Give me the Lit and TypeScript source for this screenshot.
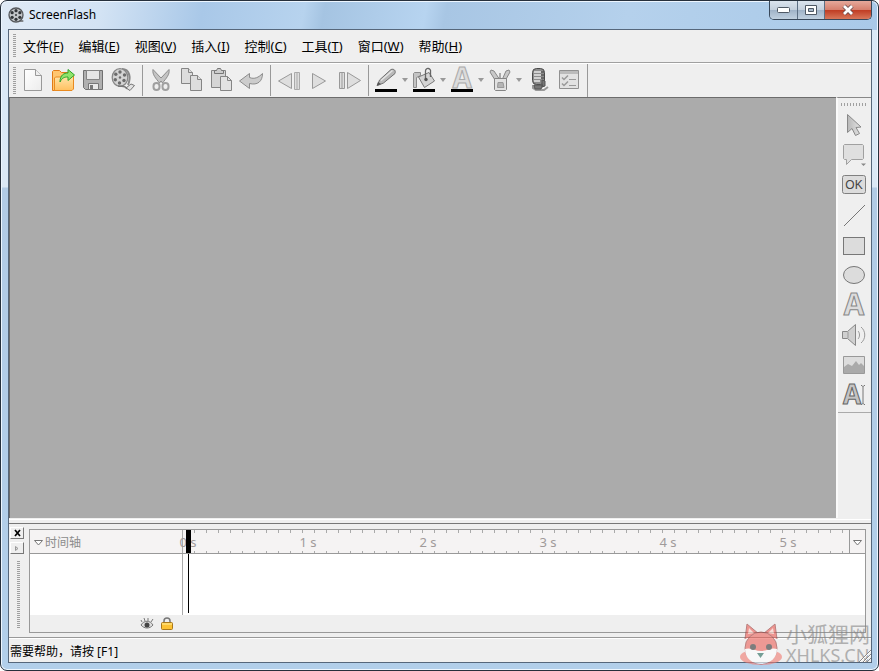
import { LitElement, html, css, svg, TemplateResult } from "lit";
import { customElement } from "lit/decorators.js";

interface Tool {
  label: string;
  art: TemplateResult;
  drop?: boolean;
}

const colorBar = svg`<path d="M1 21h22v3H1z" fill="#000"/>`;

const art = {
  reel: svg`<path d="M15 21h8" stroke="#555" stroke-width="2"/><circle cx="12" cy="12" r="10.500" fill="#c3c6ca" stroke="#55585c" stroke-width="2"/>
    <g fill="#33363a"><circle cx="12" cy="5.500" r="2.400"/><circle cx="17.800" cy="8.500" r="2.400"/><circle cx="17.800" cy="15.500" r="2.400"/><circle cx="12" cy="18.500" r="2.400"/><circle cx="6.200" cy="15.500" r="2.400"/><circle cx="6.200" cy="8.500" r="2.400"/><circle cx="12" cy="12" r="1.500"/></g>`,
  page: svg`<path d="M3.500 1.500h11l6 6v15h-17z" fill="url(#paper)" stroke="#999"/><path d="M14.500 1.500v6h6" fill="#eee" stroke="#999"/>`,
  open: svg`<path d="M1.500 22.500V3.500l1-1h6l2 2h7v3h3v14l-1 1z" fill="#ffc670" stroke="#e07b18"/><path d="M3.500 22.500V10l1-1h7l2-2h8l1 1v13l-1.500 1.500z" fill="url(#folder)" stroke="#e98a20"/><path d="M9 14c0-7 4-9 8-9V1.500L23.500 7 17 12.500V9c-4 0-6 1-8 5z" fill="#8fe36a" stroke="#2fa32b"/>`,
  save: svg`<path d="M2.500 2.500h19v19h-17l-2-2z" fill="#b0b0b0" stroke="#707070"/><path d="M5.500 2.500h13v9h-13z" fill="#e6e6e6" stroke="#858585"/><path d="M7.500 15.500h10v6h-10z" fill="#e9e9e9" stroke="#777"/><path d="M9 17h3v4H9z" fill="#777"/>`,
  film: svg`<path d="M11 1c8 0 9 9 6 16" fill="none" stroke="#888" stroke-width="2"/><path d="M15 20l5-4 3.500 1.500-4.500 5z" fill="#e2e2e2" stroke="#777"/><ellipse cx="9" cy="9.500" rx="7.800" ry="8.800" fill="#d4d4d4" stroke="#888" stroke-width="1.300"/><path d="M7 18c4 1 7-1 9 3" fill="none" stroke="#777" stroke-width="1.500"/><g fill="#6c6c6c"><circle cx="9" cy="4" r="1.700"/><circle cx="13.500" cy="7" r="1.700"/><circle cx="13" cy="12.500" r="1.700"/><circle cx="8.500" cy="15" r="1.700"/><circle cx="4.300" cy="11.800" r="1.700"/><circle cx="4.800" cy="6.300" r="1.700"/><circle cx="9" cy="9.500" r="1.200"/></g>`,
  cut: svg`<path d="M4 1.500c-1 5 3 9 6.500 13.500l1.500-2 1.500 2C17 10.500 21 6.500 20 1.500L12 10z" fill="#c4c4c4" stroke="#8c8c8c"/><g fill="none" stroke="#a0a0a0" stroke-width="2"><rect x="4.500" y="15" width="6" height="7" rx="3"/><rect x="13.500" y="15" width="6" height="7" rx="3"/></g>`,
  copy: svg`<g fill="#ddd" stroke="#858585"><path d="M2.500 .5h7l4 4v11h-11z"/><path d="M9.500 .5v4h4"/><path d="M11.500 7.500h7l4 4v11h-11z"/><path d="M18.500 7.500v4h4"/></g>`,
  paste: svg`<path d="M2.500 2.500h14v17h-14z" fill="#d5d5d5" stroke="#858585"/><path d="M5.500 5.500v-3h2l1-2h3l1 2h2v3z" fill="#ccc" stroke="#777"/><path d="M11.500 8.500h7l4 4v10h-11z" fill="#e2e2e2" stroke="#858585"/><path d="M18.500 8.500v4h4" fill="none" stroke="#858585"/>`,
  undo: svg`<path d="M.5 13l10-7.500v4c5 2 9 0 13-4 0 8-5 12-13 10v5z" fill="#ccc" stroke="#8c8c8c"/>`,
  prev: svg`<path d="M14.500 5.500v15L1.500 13z" fill="#dedede" stroke="#999"/><path d="M17.500 4.500h5v17h-5zM20 5v16" fill="#dedede" stroke="#aaa"/>`,
  play: svg`<path d="M5.500 5.500v15L18.500 13z" fill="#dedede" stroke="#999"/>`,
  next: svg`<path d="M10.500 4.500v16l13-8z" fill="#dedede" stroke="#999"/><path d="M2.500 4.500h5v16h-5zM5 5v15" fill="#dedede" stroke="#999"/>`,
  pen: svg`<path d="M3.500 17.500L5.500 12 17 1.500c3-1 5 1 4 4L9.500 15z" fill="#b8b8b8" stroke="#707070"/><path d="M7 12.500L18.500 2.500" stroke="#e4e4e4" stroke-width="1.500"/><path d="M2.500 18l1.500-4 3 2z" fill="#555"/>${colorBar}`,
  bucket: svg`<path d="M8.500 4.500h-6l-1 1v14h3v-10l4-2z" fill="#c4c4c4" stroke="#8c8c8c"/><path d="M6.500 9L17 4.500l5.500 8.500-10 6.500z" fill="#d4d4d4" stroke="#7a7a7a"/><path d="M13.500 11V3c0-4 6-3 5 1v5" fill="none" stroke="#666" stroke-width="1.300"/><circle cx="14" cy="11.500" r="1.700" fill="#555"/>${colorBar}`,
  fontColor: svg`<text x="12" y="20" text-anchor="middle" class="letter pale">A</text>${colorBar}`,
  cup: svg`<path d="M7 12L2 4l1-2 3 1 6 9zM14 12l4-9 3-1 1 2-5 9z" fill="#c8c8c8" stroke="#888"/><path d="M12 11V5" stroke="#aaa" stroke-width="2"/><path d="M6.500 10.500h12v11l-1 1h-10l-1-1z" fill="#e2e2e2" stroke="#858585"/><path d="M10 14.500h5l1 5H9.500z" fill="#b5b5b5" stroke="#999"/>`,
  mic: svg`<rect x="5.500" y=".5" width="12" height="16" rx="4" fill="#8c8c8c" stroke="#4a4a4a"/><path d="M7 4h7M7 7h7M7 10h7M7 13h6" stroke="#e8e8e8" stroke-width="1.500"/><path d="M14 4h3M14 7h3M14 10h3" stroke="#444"/><path d="M6 17v3l3 2h8l4-3" fill="none" stroke="#999" stroke-width="2"/><path d="M7 17h9l-2 4H8zM15 12l3 1v5l-3 1z" fill="#777" stroke="#555"/>`,
  list: svg`<path d="M2.500 2.500h19v18h-19z" fill="#e2e2e2" stroke="#909090"/><path d="M3 3h18v3H3z" fill="#bbb"/><path d="M5 9.500l2 2 4-4M5 15.500l2 2 4-4" fill="none" stroke="#999" stroke-width="1.500"/><path d="M12 11.500h7M12 17.500h7" stroke="#999"/>`,
  pointer: svg`<path d="M6.500 1.500v18l4.500-4 3.500 7 4-2-3.500-6 5-.5z" fill="url(#metal)" stroke="#888"/>`,
  bubble: svg`<path d="M2.500 2.500l1-1h18l1 1v13l-1 1h-11l-5 5v-5h-2l-1-1z" fill="#dfdfdf" stroke="#a0a0a0"/><path d="M20 20.500h5l-2.500 2.500z" fill="#888"/>`,
  ok: svg`<rect x="1.500" y="2.500" width="23" height="18" rx="2" fill="#dcdcdc" stroke="#808080"/><text x="13" y="16" text-anchor="middle" class="okay">OK</text>`,
  line: svg`<path d="M3 23L24 2" stroke="#777"/>`,
  rect: svg`<rect x="2.500" y="4.500" width="21" height="17" fill="#dcdcdc" stroke="#777"/>`,
  ellipse: svg`<ellipse cx="13" cy="12" rx="10.500" ry="8.500" fill="#dcdcdc" stroke="#777"/>`,
  letter: svg`<text x="13" y="22" text-anchor="middle" class="letter">A</text>`,
  sound: svg`<path d="M1.500 8.500h5l8-7v21l-8-7h-5z" fill="#d0d0d0" stroke="#888"/><path d="M7 9v6M17 8c2 2 2 6 0 8M20 4c5 4 5 12 0 16" fill="none" stroke="#999"/>`,
  image: svg`<path d="M2.500 3.500h21v17h-21z" fill="#ddd" stroke="#999"/><path d="M3 14l4-3 4 2 4-5 3 4 2-2 3 3v7H3z" fill="#aaa"/>`,
  input: svg`<text x="11" y="21" text-anchor="middle" class="letter dark">A</text><path d="M20 2.500h1l1 1 1-1h1M20 21.500h1l1-1 1 1h1M22 3v18" fill="none" stroke="#777"/>`,
};

const toolGroups: Tool[][] = [
  [
    { label: "新建", art: art.page },
    { label: "打开", art: art.open },
    { label: "保存", art: art.save },
    { label: "导出影片", art: art.film },
  ],
  [
    { label: "剪切", art: art.cut },
    { label: "复制", art: art.copy },
    { label: "粘贴", art: art.paste },
    { label: "撤销", art: art.undo },
  ],
  [
    { label: "上一帧", art: art.prev },
    { label: "播放", art: art.play },
    { label: "下一帧", art: art.next },
  ],
  [
    { label: "线条颜色", art: art.pen, drop: true },
    { label: "填充颜色", art: art.bucket, drop: true },
    { label: "文字颜色", art: art.fontColor, drop: true },
    { label: "效果", art: art.cup, drop: true },
    { label: "录音", art: art.mic },
    { label: "属性", art: art.list },
  ],
];

const paletteTools: Tool[] = [
  { label: "选择", art: art.pointer },
  { label: "气泡", art: art.bubble },
  { label: "按钮", art: art.ok },
  { label: "直线", art: art.line },
  { label: "矩形", art: art.rect },
  { label: "椭圆", art: art.ellipse },
  { label: "文本", art: art.letter },
  { label: "声音", art: art.sound },
  { label: "图片", art: art.image },
  { label: "输入框", art: art.input },
];

const menus = [
  ["文件", "F"],
  ["编辑", "E"],
  ["视图", "V"],
  ["插入", "I"],
  ["控制", "C"],
  ["工具", "T"],
  ["窗口", "W"],
  ["帮助", "H"],
];

const seconds = [0, 1, 2, 3, 4, 5];

@customElement("app-root")
export class AppRoot extends LitElement {
  static styles = css`
    :host {
      display: block;
      font: 13px/20px "Noto Sans", "Noto Sans CJK SC", sans-serif;
      color: #000;
    }
    * {
      box-sizing: border-box;
    }
    button {
      margin: 0;
      padding: 0;
      border: 0;
      background: none;
      font: inherit;
      color: inherit;
    }
    svg {
      display: block;
      overflow: visible;
    }
    .defs {
      position: absolute;
      width: 0;
      height: 0;
    }
    .window {
      position: relative;
      display: flex;
      flex-direction: column;
      min-height: 100vh;
      padding: 0 6px 7px 7px;
      border: 1px solid #26303c;
      border-radius: 7px;
      background:
        linear-gradient(100deg, #dfeaf6 0, #d3e3f4 100px, #a9c8e8 200px, #b7d3ee 300px, #a5c4e2 320px, #b7d4f0 420px, #a8c6e4 440px, #b5d1ec 620px, #a9c9e8 100%) 0 0 / 100% 29px no-repeat,
        linear-gradient(#d9e8f7 0, #dbe8f5 186px, #b2cbe5 187px, #b2cfea 100%);
      box-shadow: inset 0 0 0 1px #edf6ff;
    }
    .title {
      display: flex;
      justify-content: space-between;
      align-items: flex-start;
      height: 28px;
      flex: none;
    }
    .brand {
      display: flex;
      align-items: center;
      gap: 5px;
      height: 28px;
      margin: 0;
      font-size: 12px;
      font-weight: 400;
    }
    .caption {
      display: flex;
      border: 1px solid #39485a;
      border-top: 0;
      border-radius: 0 0 5px 5px;
      overflow: hidden;
    }
    .cap {
      display: grid;
      place-items: center;
      width: 28px;
      height: 18px;
      border-right: 1px solid #5c6f84;
      background: linear-gradient(#dbe4ee 0, #c4d0dd 48%, #9fb2c7 50%, #c0d0df 100%);
    }
    .cap.mid {
      width: 27px;
    }
    .cap.close {
      width: 46px;
      border: 0;
      background: linear-gradient(#e5a99b 0, #d6806e 48%, #bf3b22 50%, #d8775a 100%);
    }
    .client {
      display: flex;
      flex-direction: column;
      flex: 1;
      border: 1px solid #56677b;
      background: #efefef;
    }
    .menubar {
      display: flex;
      align-items: center;
      height: 33px;
      padding-left: 4px;
      border-bottom: 1px solid #a0a0a0;
    }
    .menus {
      display: flex;
      gap: 1px;
    }
    .menus button {
      padding: 0 7px;
    }
    .grip {
      flex: none;
      width: 3px;
      height: 24px;
      background: repeating-linear-gradient(#a0a0a0 0 1px, #efefef 1px 2px);
    }
    .grip.wide {
      width: 26px;
      height: 3px;
      margin: 5px 0 4px 3px;
      background: repeating-linear-gradient(90deg, #a0a0a0 0 1px, #efefef 1px 3px);
    }
    .toolbar {
      display: flex;
      height: 34px;
      padding-left: 4px;
      border-top: 1px solid #fff;
    }
    .toolbar .grip {
      height: 27px;
      margin: 3px 2px 0 0;
    }
    .group {
      display: flex;
      align-items: center;
      padding-bottom: 2px;
    }
    .rule {
      width: 8px;
      height: 31px;
      border-left: 1px solid #999;
      margin: 1px -4px 0 4px;
    }
    .rule.end {
      height: 33px;
      margin: 0 0 0 3px;
    }
    .tool {
      display: grid;
      place-items: center;
      width: 30px;
      height: 30px;
    }
    .tool.split {
      width: 28px;
    }
    .drop {
      display: grid;
      place-items: center;
      width: 10px;
      height: 30px;
    }
    .letter {
      font: bold 34px "Liberation Mono", monospace;
      fill: #dcdcdc;
      stroke: #888;
    }
    .letter.pale {
      font-size: 32px;
      stroke: #aaa;
    }
    .letter.dark {
      font-size: 30px;
      fill: #c4c4c4;
      stroke: #666;
    }
    .okay {
      font: 12px "Liberation Sans", sans-serif;
      fill: #444;
    }
    .middle {
      display: flex;
      flex: 1;
    }
    .stage {
      flex: 1;
      border: 1px solid #6c6c6c;
      border-width: 1px 0 0 1px;
      background: #ababab;
    }
    .side {
      width: 35px;
      border-left: 2px solid #fafafa;
      border-top: 1px solid #888;
    }
    .palette {
      padding-bottom: 2px;
      border-bottom: 1px solid #aaa;
    }
    .dock {
      display: flex;
      margin-top: 5px;
      padding: 5px 5px 4px 1px;
      border-top: 1px solid #777;
      border-bottom: 1px solid #999;
      box-shadow: 0 -3px 0 #efefef, 0 -4px 0 #fff;
    }
    .dockside {
      display: flex;
      flex-direction: column;
      width: 19px;
      gap: 3px;
      margin-top: -2px;
    }
    .mini {
      display: grid;
      place-items: center;
      flex: none;
      width: 14px;
      height: 12px;
      border: 1px solid #fff;
      border-right-color: #777;
      border-bottom-color: #777;
    }
    .dockside .grip {
      height: 68px;
      margin: 4px 0 0 7px;
    }
    .timeline {
      flex: 1;
      min-width: 0;
      border: 1px solid #999;
    }
    .head {
      display: flex;
      height: 24px;
      background: #f5f3f3;
      border-bottom: 1px solid #999;
      color: #8c8c8c;
    }
    .name {
      display: flex;
      align-items: center;
      gap: 2px;
      width: 153px;
      padding: 2px 0 0 4px;
      border-right: 1px solid #aaa;
      font-size: 12px;
    }
    .ruler {
      position: relative;
      display: flex;
      flex: 1;
      min-width: 0;
      background:
        repeating-linear-gradient(90deg, transparent 0 11px, #aaa 11px 12px) 0 0 / 100% 3px no-repeat,
        repeating-linear-gradient(90deg, transparent 0 11px, #aaa 11px 12px) 0 100% / 100% 2px no-repeat;
    }
    .second {
      flex: none;
      width: 24px;
      margin-left: -7px;
      margin-right: 103px;
      text-align: center;
      white-space: nowrap;
      line-height: 25px;
      color: #a09a9a;
    }
    .playhead {
      position: absolute;
      left: 3px;
      top: 0;
      width: 5px;
      height: 23px;
      background: #000;
    }
    .more {
      display: grid;
      place-items: center;
      flex: none;
      width: 16px;
      padding-top: 2px;
      border-left: 1px solid #999;
    }
    .tracks {
      display: flex;
      height: 61px;
      background: #fff;
    }
    .track-names {
      width: 153px;
      border-right: 1px solid #aaa;
    }
    .track {
      padding-left: 5px;
    }
    .cursor-line {
      width: 1px;
      height: 59px;
      background: #000;
    }
    .foot {
      display: flex;
      align-items: center;
      gap: 6px;
      height: 17px;
      padding-left: 110px;
    }
    .status {
      display: flex;
      align-items: center;
      height: 24px;
      padding: 2px 0 0 1px;
      border-top: 1px solid #fff;
      font-size: 12px;
    }
    .mark {
      position: absolute;
      right: 8px;
      bottom: 4px;
      display: flex;
      gap: 3px;
      opacity: 0.6;
      color: #858585;
      pointer-events: none;
    }
    .words {
      width: 84px;
      white-space: nowrap;
      font-size: 21px;
      line-height: 24px;
    }
    .words div + div {
      font: 18px/18px "Noto Sans", sans-serif;
    }
    .resize {
      position: absolute;
      right: 7px;
      bottom: 8px;
    }
  `;

  private icon(content: TemplateResult, size = 24) {
    return html`<svg width=${size} height=${size} viewBox="0 0 24 24" fill="none" aria-hidden="true">${content}</svg>`;
  }

  private tool(t: Tool) {
    return html`<button class="tool ${t.drop ? "split" : ""}" aria-label=${t.label}>${this.icon(t.art)}</button>
      ${t.drop
        ? html`<button class="drop" aria-label="${t.label}选项"><svg width="6" height="4"><path d="M0 0h6L3 4z" fill="#999" /></svg></button>`
        : ""}`;
  }

  private triangle() {
    return html`<svg width="9" height="6"><path d="M.5 .5h8L4.500 5z" fill="#fff" stroke="#777" /></svg>`;
  }

  render() {
    return html`
      <svg class="defs" aria-hidden="true">
        <defs>
          <linearGradient id="paper" x1="0" y1="0" x2="1" y2="1">
            <stop offset="0" stop-color="#fff" />
            <stop offset="1" stop-color="#ececec" />
          </linearGradient>
          <linearGradient id="folder" x1="0" y1="0" x2="0" y2="1">
            <stop offset="0" stop-color="#ffe8b0" />
            <stop offset="1" stop-color="#ffc060" />
          </linearGradient>
          <linearGradient id="metal" x1="0" y1="0" x2="1" y2="0">
            <stop offset="0" stop-color="#b8b8b8" />
            <stop offset="1" stop-color="#e4e4e4" />
          </linearGradient>
        </defs>
      </svg>
      <div class="window">
        <header class="title">
          <h1 class="brand">${this.icon(art.reel, 16)}<span>ScreenFlash</span></h1>
          <div class="caption">
            <button class="cap" aria-label="最小化"><svg width="13" height="6"><rect x="0.500" y="0.500" width="12" height="5" rx="1" fill="#fff" stroke="#4f5965" /></svg></button>
            <button class="cap mid" aria-label="最大化"><svg width="12" height="10"><path d="M.5 .5h11v9H.5z" fill="#fff" stroke="#4f5965" /><path d="M3.500 3.500h5v3h-5z" fill="#a9b9ca" stroke="#4f5965" /></svg></button>
            <button class="cap close" aria-label="关闭"><svg width="12" height="10"><path d="M2 1l8 8M10 1l-8 8" stroke="#6b4a4a" stroke-width="4.500" /><path d="M2 1l8 8M10 1l-8 8" stroke="#fff" stroke-width="2.800" /></svg></button>
          </div>
        </header>
        <main class="client">
          <nav class="menubar">
            <div class="grip"></div>
            <div class="menus">${menus.map(([name, key]) => html`<button>${name}(<u>${key}</u>)</button>`)}</div>
          </nav>
          <div class="toolbar" role="toolbar">
            <div class="grip"></div>
            ${toolGroups.map(
              (group, i) => html`${i ? html`<div class="rule"></div>` : ""}
                <div class="group">${group.map((t) => this.tool(t))}</div>`
            )}
            <div class="rule end"></div>
          </div>
          <div class="middle">
            <section class="stage" aria-label="舞台"></section>
            <aside class="side">
              <div class="palette">
                <div class="grip wide"></div>
                ${paletteTools.map((t) => this.tool(t))}
              </div>
            </aside>
          </div>
          <section class="dock">
            <div class="dockside">
              <button class="mini" aria-label="关闭时间轴"><svg width="7" height="6"><path d="M1 0l5 6M6 0L1 6" stroke="#000" stroke-width="1.700" /></svg></button>
              <button class="mini" aria-label="展开"><svg width="4" height="5"><path d="M.5 .5v4L3 2.500z" fill="#ddd" stroke="#999" /></svg></button>
              <div class="grip"></div>
            </div>
            <div class="timeline">
              <div class="head">
                <div class="name">${this.triangle()}<span>时间轴</span></div>
                <div class="ruler">
                  ${seconds.map((s) => html`<span class="second">${s} s</span>`)}
                  <div class="playhead"></div>
                </div>
                <button class="more" aria-label="时间轴选项">${this.triangle()}</button>
              </div>
              <div class="tracks">
                <div class="track-names"></div>
                <div class="track"><div class="cursor-line"></div></div>
              </div>
              <div class="foot">
                <svg width="14" height="12"><path d="M1 7c3-5 9-5 12 0-3 4-9 4-12 0z" fill="#ddd" stroke="#777" /><circle cx="7" cy="7" r="2.500" fill="#444" /><path d="M2 4L1 2M5 3L4 0M8 3V0M11 4l2-3" stroke="#777" /></svg>
                <svg width="14" height="14"><path d="M4 6V4c0-4 6-4 6 0v2" fill="none" stroke="#777" stroke-width="1.500" /><rect x="1.500" y="5.500" width="11" height="7" rx="1" fill="#fdc233" stroke="#aa781a" /><path d="M2 7h10" stroke="#fff0a0" /></svg>
              </div>
            </div>
          </section>
          <footer class="status">需要帮助，请按 [F1]</footer>
        </main>
        <div class="mark">
          <svg width="44" height="44" viewBox="0 0 44 44">
            <ellipse cx="22" cy="35" rx="21" ry="8" fill="#f27970" />
            <path d="M6 17L8 2l12 10M38 17L36 2 24 12" fill="#ed5850" stroke="#963a38" />
            <path d="M9 12l1-6 5 5M35 12l-1-6-5 5" fill="#ffd2c9" />
            <circle cx="22" cy="26" r="16" fill="#ed6158" stroke="#963a38" />
            <path d="M6 27c6-2 10 2 16 2s10-4 16-2c0 20-32 20-32 0z" fill="#fff" />
            <circle cx="14" cy="25" r="3" fill="#333" /><circle cx="30" cy="25" r="3" fill="#333" />
            <path d="M18 31h7l-3.500 5z" fill="#256b5c" />
          </svg>
          <div class="words"><div>小狐狸网</div><div>XHLKS.CN</div></div>
        </div>
        <svg class="resize" width="13" height="13"><path d="M1 13L13 1M5 13l8-8M9 13l4-4" stroke="#888" /><path d="M2 13L13 2M6 13l7-7" stroke="#fff" /></svg>
      </div>
    `;
  }
}
